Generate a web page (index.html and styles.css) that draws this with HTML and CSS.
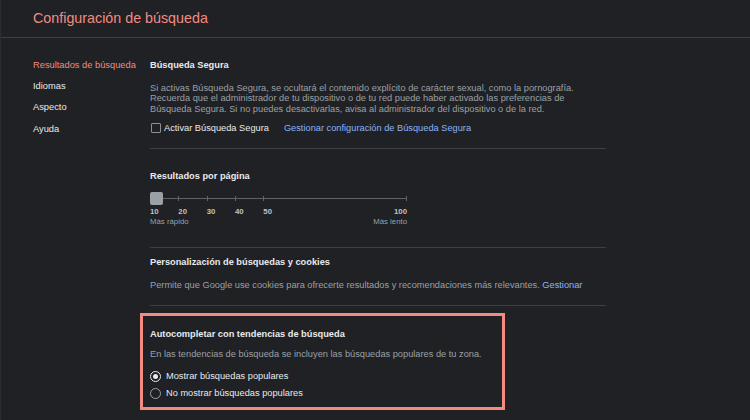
FILE: index.html
```html
<!DOCTYPE html>
<html lang="es">
<head>
    <meta charset="UTF-8">
    <meta name="viewport" content="width=device-width, initial-scale=1.0">
    <title>Configuración de búsqueda</title>
    <link rel="stylesheet" href="styles.css">
</head>
<body>
    <div class="header">
        <h1>Configuración de búsqueda</h1>
    </div>

    <div class="page">
        <ul class="nav">
            <li class="active">Resultados de búsqueda</li>
            <li>Idiomas</li>
            <li>Aspecto</li>
            <li>Ayuda</li>
        </ul>

        <div class="content">
            <!-- Búsqueda Segura -->
            <div class="section safe">
                <h3>Búsqueda Segura</h3>
                <p class="desc">Si activas Búsqueda Segura, se ocultará el contenido explícito de carácter sexual, como la pornografía. Recuerda que el administrador de tu dispositivo o de tu red puede haber activado las preferencias de Búsqueda Segura. Si no puedes desactivarlas, avisa al administrador del dispositivo o de la red.</p>
                <div class="check-row">
                    <span class="checkbox"></span>
                    <span class="check-label">Activar Búsqueda Segura</span>
                    <a href="#" class="link">Gestionar configuración de Búsqueda Segura</a>
                </div>
            </div>

            <!-- Resultados por página -->
            <div class="section results">
                <h3>Resultados por página</h3>
                <div class="slider">
                    <div class="track">
                        <span class="tick"></span>
                        <span class="tick"></span>
                        <span class="tick"></span>
                        <span class="tick"></span>
                        <span class="tick"></span>
                    </div>
                    <span class="thumb"></span>
                </div>
                <div class="slider-labels">
                    <span>10</span>
                    <span>20</span>
                    <span>30</span>
                    <span>40</span>
                    <span>50</span>
                    <span class="last">100</span>
                </div>
                <div class="slider-hints">
                    <span>Más rápido</span>
                    <span>Más lento</span>
                </div>
            </div>

            <!-- Personalización -->
            <div class="section cookies">
                <h3>Personalización de búsquedas y cookies</h3>
                <p class="desc">Permite que Google use cookies para ofrecerte resultados y recomendaciones más relevantes. <a href="#" class="link">Gestionar</a></p>
            </div>

            <!-- Autocompletar -->
            <div class="section trends">
                <div class="highlight">
                    <h3>Autocompletar con tendencias de búsqueda</h3>
                    <p class="desc">En las tendencias de búsqueda se incluyen las búsquedas populares de tu zona.</p>
                    <div class="radio-row">
                        <span class="radio checked"></span>
                        <span>Mostrar búsquedas populares</span>
                    </div>
                    <div class="radio-row">
                        <span class="radio"></span>
                        <span>No mostrar búsquedas populares</span>
                    </div>
                </div>
            </div>
        </div>
    </div>
</body>
</html>
```

FILE: styles.css
```css
* {
    margin: 0;
    padding: 0;
    box-sizing: border-box;
    font-family: 'Liberation Sans', Arial, sans-serif;
}

body {
    background: #202124;
    color: #e8eaed;
    width: 750px;
    height: 420px;
    overflow: hidden;
    border-left: 1px solid #2c2d30;
}

.header {
    height: 38px;
    padding-left: 32px;
    border-bottom: 1px solid #3c4043;
}

.header h1 {
    color: #f28b82;
    font-size: 14.3px;
    font-weight: 400;
    line-height: 37px;
}

.page {
    display: flex;
}

.nav {
    list-style: none;
    width: 149px;
    padding: 16.5px 0 0 32px;
}

.nav li {
    font-size: 9.3px;
    line-height: 21.4px;
}

.nav li.active {
    color: #f28b82;
}

.content {
    width: 456px;
}

.section {
    border-bottom: 1px solid #3c4043;
}

.section h3 {
    font-size: 9.25px;
    font-weight: 700;
    line-height: 14px;
}

.desc {
    font-size: 9.25px;
    line-height: 10.6px;
    color: #9aa0a6;
}

.link {
    color: #8ab4f8;
    text-decoration: none;
}

/* Búsqueda Segura */
.safe {
    padding: 20px 0 13px;
}

.safe .desc {
    margin-top: 10.5px;
}

.check-row {
    display: flex;
    align-items: center;
    margin-top: 6.5px;
    font-size: 9.25px;
    line-height: 14px;
}

.checkbox {
    width: 10px;
    height: 10px;
    border: 1px solid #8c9095;
    border-radius: 1px;
    margin: 0 3px 0 1px;
}

.check-label {
    margin-right: 15px;
}

/* Slider */
.results {
    padding: 20px 0 20px;
}

.slider {
    position: relative;
    width: 257px;
    height: 14px;
    margin-top: 9px;
}

.track {
    display: flex;
    align-items: center;
    height: 14px;
    background: linear-gradient(#5f6368, #5f6368) 0 50% / 100% 1px no-repeat;
}

.tick {
    width: 28.33px;
    height: 5px;
    border-left: 1px solid #5f6368;
}

.track::after {
    content: '';
    margin-left: auto;
    height: 5px;
    border-left: 1px solid #5f6368;
}

.thumb {
    position: absolute;
    left: 0;
    top: 0.5px;
    width: 13px;
    height: 13px;
    border-radius: 2px;
    background: #9aa0a6;
}

.slider-labels {
    display: flex;
    width: 257px;
    margin-top: 1px;
    font-size: 7.8px;
    font-weight: 700;
    line-height: 10px;
    color: #bdc1c6;
}

.slider-labels span {
    width: 28.33px;
}

.slider-labels .last {
    width: auto;
    margin-left: auto;
}

.slider-hints {
    display: flex;
    justify-content: space-between;
    width: 257px;
    font-size: 7.8px;
    line-height: 10px;
    color: #9aa0a6;
}

/* Personalización */
.cookies {
    padding: 7px 0 14px;
}

.cookies .desc {
    margin-top: 10px;
    line-height: 12px;
}

/* Autocompletar */
.trends {
    padding: 7px 0 10px;
}

.highlight {
    width: 365px;
    margin-left: -10px;
    padding: 11px 7px 5px;
    border: 3px solid #f28b82;
}

.trends .desc {
    margin-top: 6.8px;
    line-height: 12px;
}

.trends .desc + .radio-row {
    margin-top: 8px;
}

.radio-row {
    display: flex;
    align-items: center;
    font-size: 9.25px;
    line-height: 17px;
}

.radio-row + .radio-row {
    margin-top: 0.7px;
}

.radio {
    width: 11px;
    height: 11px;
    border: 1px solid #9aa0a6;
    border-radius: 50%;
    margin-right: 5px;
    display: flex;
    align-items: center;
    justify-content: center;
}

.radio.checked {
    border-color: #e8eaed;
}

.radio.checked::after {
    content: '';
    width: 5px;
    height: 5px;
    border-radius: 50%;
    background: #e8eaed;
}
```
